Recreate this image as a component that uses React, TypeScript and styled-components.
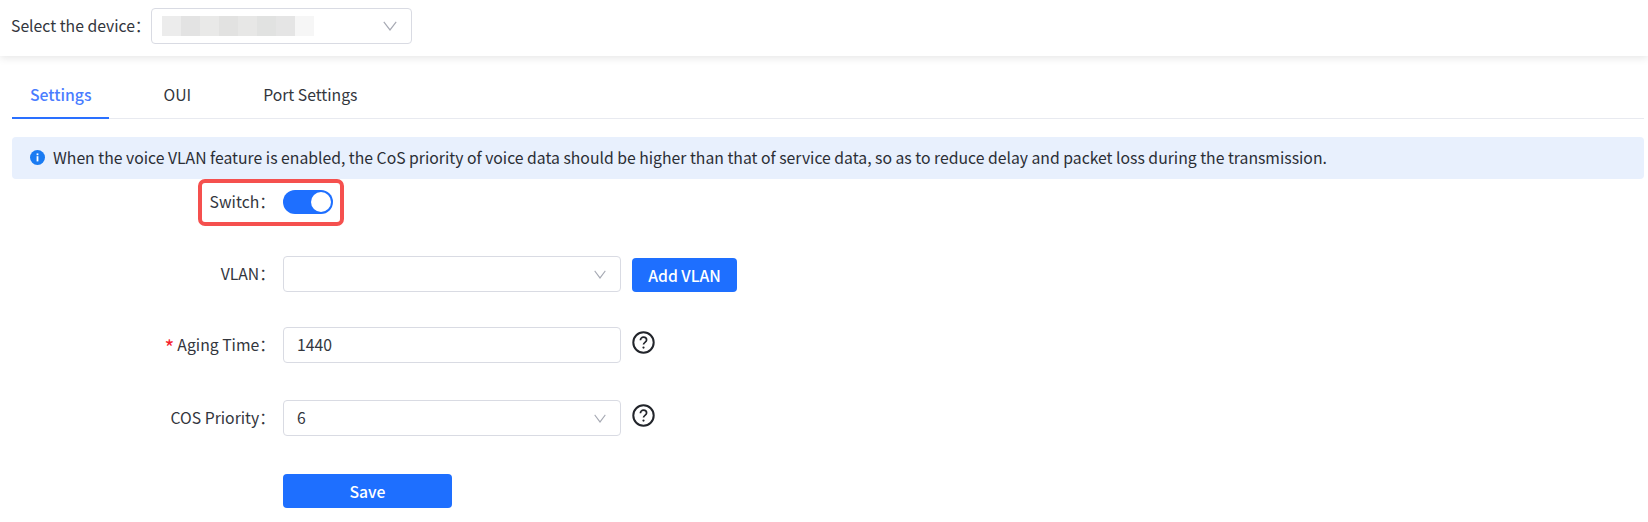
import React from "react";
import styled, { createGlobalStyle } from "styled-components";

const Global = createGlobalStyle`
  html, body { margin: 0; padding: 0; background: #fff; }
  body { font-family: "Noto Sans CJK SC", "Noto Sans", sans-serif; font-size: 15.75px; color: #33363d; }
`;

const Page = styled.div`
  width: 1648px;
  height: 522px;
  overflow: hidden;
  background: #fff;
  display: flex;
  flex-direction: column;
`;

const Header = styled.header`
  height: 56px;
  box-sizing: border-box;
  padding: 8px 0 0 11px;
  display: flex;
  align-items: flex-start;
  box-shadow: 0 2px 8px rgba(0, 0, 0, 0.1);
`;

const HeaderLabel = styled.span`
  width: 140px;
  line-height: 36px;
  white-space: nowrap;
`;

const SelectBox = styled.div<{ $width: number }>`
  width: ${(p) => p.$width}px;
  height: 36px;
  box-sizing: border-box;
  border: 1px solid #d9dbe3;
  border-radius: 4px;
  background: #fff;
  display: flex;
  align-items: center;
  padding: 0 14px 0 10px;
`;

const Blur = styled.div`
  display: flex;
  height: 20px;
`;

const BlurCell = styled.span<{ $shade: string }>`
  width: 19px;
  background: ${(p) => p.$shade};
`;

const Value = styled.span`
  line-height: 34px;
  padding-left: 3px;
`;

const Chevron = styled.svg<{ $w: number; $h: number }>`
  width: ${(p) => p.$w}px;
  height: ${(p) => p.$h}px;
  fill: none;
  stroke: #a6a9b3;
  stroke-width: 1.2;
  flex: none;
  margin-left: auto;
`;

const Tabs = styled.nav`
  margin: 14px 4px 0 12px;
  height: 49px;
  box-sizing: border-box;
  display: flex;
  gap: 36px;
  border-bottom: 1px solid #e8eaf0;
`;

const Tab = styled.div<{ $active?: boolean }>`
  height: 49px;
  box-sizing: border-box;
  padding: 0 18px;
  text-align: center;
  line-height: 49px;
  white-space: nowrap;
  font-weight: ${(p) => (p.$active ? 500 : 400)};
  color: ${(p) => (p.$active ? "#4a7dff" : "#33363d")};
  border-bottom: 2px solid ${(p) => (p.$active ? "#2a70ff" : "transparent")};
`;

const Alert = styled.div`
  margin: 18px 4px 0 12px;
  height: 42px;
  box-sizing: border-box;
  padding: 0 0 2px 18px;
  border-radius: 4px;
  background: #e8f0fd;
  display: flex;
  align-items: center;
  gap: 8px;
  white-space: nowrap;
  color: #2b2e35;
`;

const InfoIcon = styled.svg`
  width: 15px;
  height: 15px;
  flex: none;
`;

const Form = styled.div`
  position: relative;
  display: flex;
  flex-direction: column;
`;

const Row = styled.div<{ $height: number }>`
  height: ${(p) => p.$height}px;
  display: grid;
  grid-template-columns: 283px 338px auto;
  align-items: start;
`;

const Label = styled.label<{ $top?: number }>`
  text-align: right;
  padding-right: 8px;
  margin-top: ${(p) => p.$top ?? 0}px;
  line-height: 36px;
  white-space: nowrap;
`;

const Star = styled.span`
  color: #f5222d;
  font-size: 21px;
  line-height: 1;
  margin-right: 3px;
  vertical-align: -5px;
`;

const Toggle = styled.span`
  margin-top: 11px;
  width: 50px;
  height: 24px;
  box-sizing: border-box;
  border-radius: 12px;
  background: #1e6fff;
  display: flex;
  justify-content: flex-end;
  padding: 2px;
`;

const Knob = styled.span`
  width: 20px;
  height: 20px;
  border-radius: 50%;
  background: #fff;
`;

const Input = styled.div`
  width: 338px;
  height: 36px;
  box-sizing: border-box;
  border: 1px solid #d9dbe3;
  border-radius: 4px;
  padding: 0 13px;
  line-height: 34px;
`;

const Aside = styled.div`
  margin-left: 11px;
  display: flex;
  align-items: flex-start;
`;

const Button = styled.button<{ $width: number }>`
  width: ${(p) => p.$width}px;
  height: 34px;
  border: 0;
  border-radius: 4px;
  background: #1e6fff;
  color: #fff;
  font: 500 15.75px "Noto Sans CJK SC", "Noto Sans", sans-serif;
  padding: 0;
`;

const AddButton = styled(Button)`
  margin-top: 2px;
`;

const HelpIcon = styled.svg`
  width: 23px;
  height: 23px;
  margin-top: 4px;
  fill: none;
  stroke: #22252b;
`;

const HighlightFrame = styled.div`
  position: absolute;
  left: 198px;
  top: 0;
  width: 146px;
  height: 47px;
  box-sizing: border-box;
  border: 4px solid #f5504e;
  border-radius: 7px;
  pointer-events: none;
`;

const SaveRow = styled.div`
  padding-left: 283px;
`;

const shades = ["#ececec", "#e3e3e3", "#e9e9e8", "#e2e2e1", "#e7e7e6", "#e1e2e1", "#e5e5e5", "#f6f6f6"];

const DownArrow = ({ wide }: { wide?: boolean }) => (
  <Chevron viewBox="0 0 14 9" preserveAspectRatio="none" $w={wide ? 14 : 12} $h={wide ? 10 : 9}>
    <path d="M.8 .8 7 8 13.2 .8" />
  </Chevron>
);

const Help = () => (
  <HelpIcon viewBox="0 0 23 23">
    <circle cx="11.5" cy="11.5" r="10.2" strokeWidth="2" />
    <path d="M8.4 9.2c0-1.8 1.4-3 3.1-3s3.1 1.1 3.1 2.8c0 2.4-3.1 2.4-3.1 4.6" strokeWidth="1.7" />
    <circle cx="11.5" cy="16.6" r="1.1" fill="#22252b" stroke="none" />
  </HelpIcon>
);

export default function App() {
  return (
    <Page>
      <Global />
      <Header>
        <HeaderLabel>Select the device：</HeaderLabel>
        <SelectBox $width={261}>
          <Blur>
            {shades.map((s, i) => (
              <BlurCell key={i} $shade={s} />
            ))}
          </Blur>
          <DownArrow wide />
        </SelectBox>
      </Header>
      <Tabs>
        <Tab $active>Settings</Tab>
        <Tab>OUI</Tab>
        <Tab>Port Settings</Tab>
      </Tabs>
      <Alert>
        <InfoIcon viewBox="0 0 15 15">
          <circle cx="7.5" cy="7.5" r="7.5" fill="#1a7bf2" />
          <rect x="6.6" y="6.2" width="1.8" height="5.2" fill="#fff" />
          <rect x="6.6" y="3.4" width="1.8" height="1.8" fill="#fff" />
        </InfoIcon>
        When the voice VLAN feature is enabled, the CoS priority of voice data should be higher than that of service data, so as to reduce delay and packet loss during the transmission.
      </Alert>
      <Form>
        <Row $height={77}>
          <Label $top={5}>Switch：</Label>
          <Toggle>
            <Knob />
          </Toggle>
        </Row>
        <HighlightFrame />
        <Row $height={71}>
          <Label>VLAN：</Label>
          <SelectBox $width={338}>
            <DownArrow />
          </SelectBox>
          <Aside>
            <AddButton $width={105}>Add VLAN</AddButton>
          </Aside>
        </Row>
        <Row $height={73}>
          <Label>
            <Star>*</Star>Aging Time：
          </Label>
          <Input>1440</Input>
          <Aside>
            <Help />
          </Aside>
        </Row>
        <Row $height={74}>
          <Label>COS Priority：</Label>
          <SelectBox $width={338}>
            <Value>6</Value>
            <DownArrow />
          </SelectBox>
          <Aside>
            <Help />
          </Aside>
        </Row>
        <SaveRow>
          <Button $width={169}>Save</Button>
        </SaveRow>
      </Form>
    </Page>
  );
}
